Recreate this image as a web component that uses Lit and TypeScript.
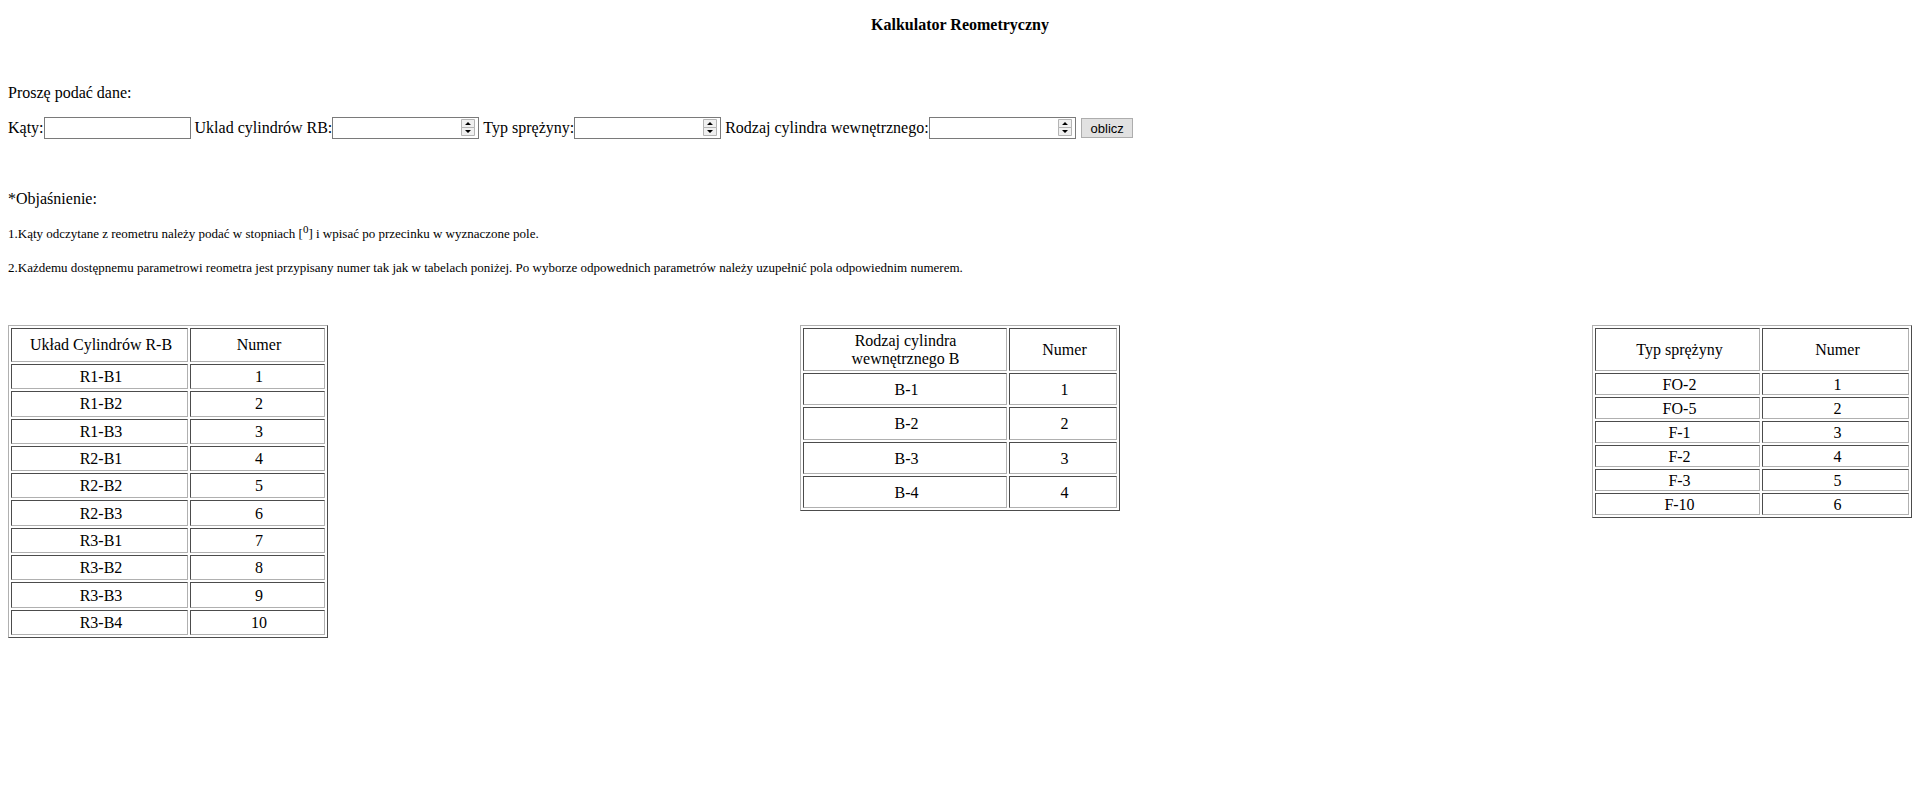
import { LitElement, html, css } from "lit";
import { customElement, property } from "lit/decorators.js";

type Row = [string, string];

@customElement("number-table")
export class NumberTable extends LitElement {
  static styles = css`
    :host {
      display: block;
      width: 320px;
    }
    .table {
      box-sizing: border-box;
      width: 100%;
      table-layout: fixed;
      border: 1px solid;
      border-color: #b0b0b0 #4c4c4c #4c4c4c #b0b0b0;
      border-collapse: separate;
      border-spacing: 2px;
      line-height: 18px;
    }
    .cell {
      box-sizing: border-box;
      padding: 1px 1px 1px 4px;
      border: 1px solid;
      border-color: #4c4c4c #b0b0b0 #b0b0b0 #4c4c4c;
      font-weight: normal;
      text-align: center;
      vertical-align: middle;
    }
    .row .cell { padding-top: 2px; padding-bottom: 0; }
    .head { height: 43px; }
    .cylinders { height: 313px; }
    .cylinders .head { height: 34px; }
    .cylinders .name { width: 177px; }
    .cylinders .row { height: 25px; }
    .cylinders .row .cell { padding-bottom: 1px; }
    .inner { height: 186px; }
    .inner .name { width: 204px; }
    .inner .head .name { padding-left: 19px; padding-right: 18px; }
    .inner .row { height: 32px; }
    .springs .name { width: 165px; }
    .springs .row { height: 22px; }
    .springs .cell { padding-left: 5px; }
  `;

  @property() heading = "";
  @property() kind = "";
  @property({ attribute: false }) rows: Row[] = [];

  render() {
    return html`
      <table class="table ${this.kind}">
        <thead>
          <tr class="head">
            <th class="cell name" scope="col">${this.heading}</th>
            <th class="cell" scope="col">Numer</th>
          </tr>
        </thead>
        <tbody>
          ${this.rows.map(
            ([name, num]) => html`<tr class="row"><td class="cell name">${name}</td><td class="cell">${num}</td></tr>`
          )}
        </tbody>
      </table>
    `;
  }
}

const numbered = (names: string[]): Row[] => names.map((name, i) => [name, String(i + 1)]);

const CYLINDERS = numbered(["R1-B1", "R1-B2", "R1-B3", "R2-B1", "R2-B2", "R2-B3", "R3-B1", "R3-B2", "R3-B3", "R3-B4"]);
const INNER = numbered(["B-1", "B-2", "B-3", "B-4"]);
const SPRINGS = numbered(["FO-2", "FO-5", "F-1", "F-2", "F-3", "F-10"]);

@customElement("app-root")
export class AppRoot extends LitElement {
  static styles = css`
    :host {
      display: block;
      padding: 16px 1px 16px 8px;
      background: #fff;
      color: #000;
      font: 16px/18px "Liberation Serif", "Times New Roman", serif;
    }
    .title {
      margin: 0 0 50px;
      font-size: 16px;
      text-align: center;
    }
    .text { margin: 0; }
    .form {
      display: flex;
      flex-wrap: wrap;
      align-items: center;
      gap: 4px;
      margin: 15px 0 51px;
    }
    .field {
      display: flex;
      align-items: center;
    }
    .input {
      box-sizing: border-box;
      width: 147px;
      height: 22px;
      margin: 0;
      padding: 1px 3px;
      border: 1px solid #7a7a7a;
      border-radius: 0;
      background: #fff;
      font: 13px "Liberation Sans", Arial, sans-serif;
    }
    .input::-webkit-inner-spin-button {
      -webkit-appearance: none;
      width: 14px;
      height: 18px;
      margin: 0;
      opacity: 1;
      background: url("data:image/svg+xml,%3Csvg xmlns='http://www.w3.org/2000/svg' width='14' height='18'%3E%3Cpath fill='%23f0f0f0' stroke='%23b4b4b4' d='M.5.5h13v8H.5zM.5 8.5h13v8H.5z'/%3E%3Cpath d='M7 3l3 3H4zM7 14l3-3H4z'/%3E%3C/svg%3E") center no-repeat;
    }
    .submit {
      box-sizing: border-box;
      width: 52px;
      height: 20px;
      margin: 0 0 0 1px;
      padding: 0 0 0 1px;
      border: 1px solid #adadad;
      border-radius: 0;
      background: #e1e1e1;
      color: #000;
      font: 13px "Liberation Sans", Arial, sans-serif;
    }
    .notes { margin-top: 17px; }
    .note {
      margin: 0 0 16px;
      font-size: 13px;
    }
    .degree {
      font-size: 11px;
      line-height: 0;
    }
    .tables {
      display: flex;
      flex-wrap: wrap;
      align-items: flex-start;
      justify-content: space-between;
      gap: 16px;
      margin-top: 48px;
    }
  `;

  private numberField(id: string, label: string) {
    return html`<div class="field"><label for=${id}>${label}</label><input class="input" id=${id} type="number" /></div>`;
  }

  render() {
    return html`
      <h1 class="title">Kalkulator Reometryczny</h1>
      <p class="text">Proszę podać dane:</p>
      <form class="form" @submit=${(e: Event) => e.preventDefault()}>
        <div class="field"><label for="angles">Kąty:</label><input class="input" id="angles" type="text" /></div>
        ${this.numberField("system", "Uklad cylindrów RB:")}
        ${this.numberField("spring", "Typ sprężyny:")}
        ${this.numberField("cylinder", "Rodzaj cylindra wewnętrznego:")}
        <button class="submit" type="submit">oblicz</button>
      </form>
      <p class="text">*Objaśnienie:</p>
      <div class="notes">
        <p class="note">1.Kąty odczytane z reometru należy podać w stopniach [<sup class="degree">0</sup>] i wpisać po przecinku w wyznaczone pole.</p>
        <p class="note">2.Każdemu dostępnemu parametrowi reometra jest przypisany numer tak jak w tabelach poniżej. Po wyborze odpowednich parametrów należy uzupełnić pola odpowiednim numerem.</p>
      </div>
      <div class="tables">
        <number-table kind="cylinders" heading="Układ Cylindrów R-B" .rows=${CYLINDERS}></number-table>
        <number-table kind="inner" heading="Rodzaj cylindra wewnętrznego B" .rows=${INNER}></number-table>
        <number-table kind="springs" heading="Typ sprężyny" .rows=${SPRINGS}></number-table>
      </div>
    `;
  }
}
